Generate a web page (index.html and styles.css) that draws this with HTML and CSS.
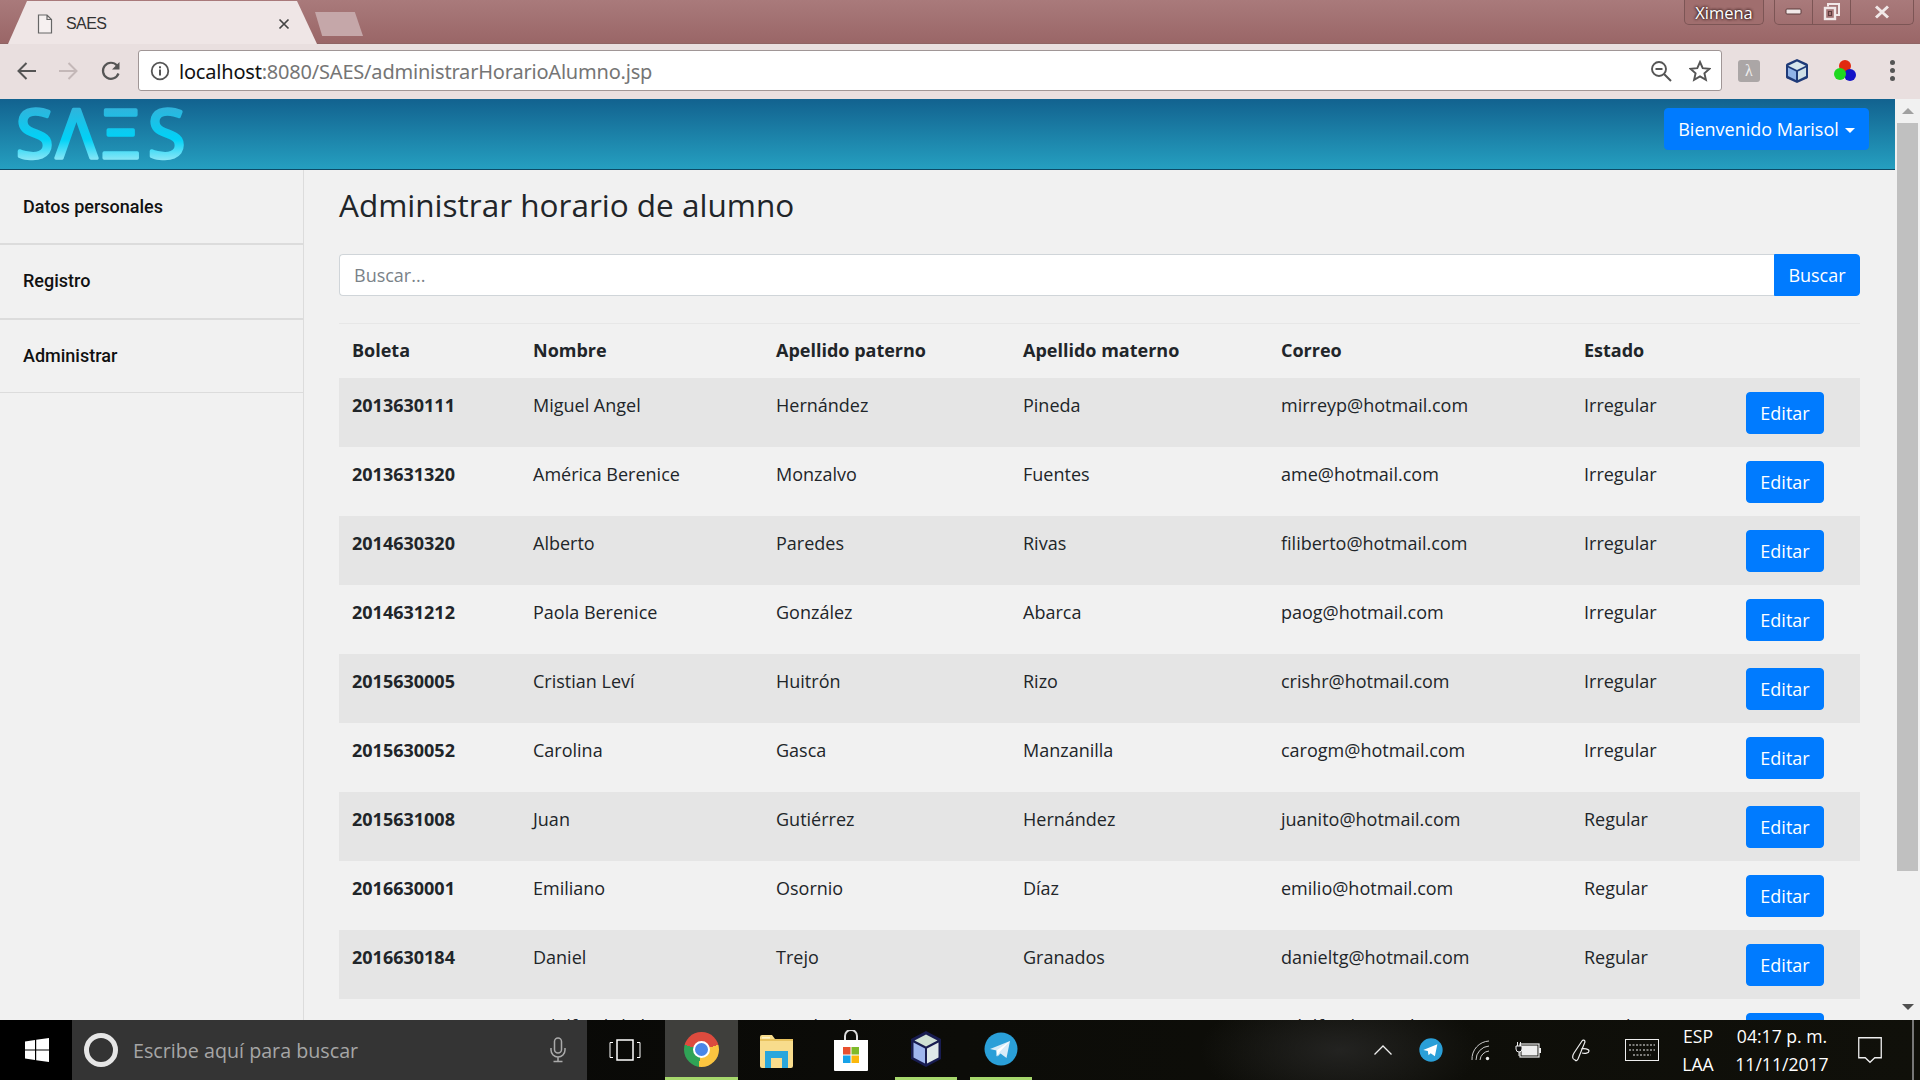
FILE: index.html
```html
<!DOCTYPE html>
<html lang="es">

<head>
    <meta charset="UTF-8">
    <meta name="viewport" content="width=device-width, initial-scale=1.0">
    <title>SAES</title>
    <link rel="stylesheet" href="styles.css">
</head>

<body>
    <div class="tabstrip">
        <div class="tab">
            <svg class="tab-icon" width="16" height="20" viewBox="0 0 16 20">
                <path d="M1.5 1h8.500l4.500 4.500v13.500h-13z M10 1v4.500h4.500" fill="#f6f0f0" stroke="#666" stroke-width="1.200"/>
            </svg>
            <span class="tab-title">SAES</span>
            <svg class="tab-close" width="12" height="12" viewBox="0 0 12 12">
                <path d="M1.500 1.500l9 9M10.500 1.500l-9 9" stroke="#444" stroke-width="1.700"/>
            </svg>
        </div>
        <div class="new-tab"></div>
        <div class="user-button">Ximena</div>
        <div class="window-buttons">
            <div class="window-button">
                <svg width="18" height="8" viewBox="0 0 18 8"><rect x="1" y="1" width="15" height="5" rx="1" fill="#f1e8e8" stroke="#5c3c3c"/></svg>
            </div>
            <div class="window-button">
                <svg width="20" height="20" viewBox="0 0 20 20"><path d="M6 4.500V2h11v11h-3" fill="none" stroke="#f1e8e8" stroke-width="2"/><rect x="3" y="6" width="10" height="11" fill="none" stroke="#f1e8e8" stroke-width="2.400"/><rect x="6.500" y="9.500" width="3" height="4" fill="none" stroke="#5c3c3c"/></svg>
            </div>
            <div class="window-button window-close">
                <svg width="16" height="14" viewBox="0 0 16 14"><path d="M2 1.500l12 11M14 1.500l-12 11" stroke="#f1e8e8" stroke-width="3"/></svg>
            </div>
        </div>
    </div>

    <div class="toolbar">
        <button class="tool-button">
            <svg width="22" height="22" viewBox="0 0 22 22"><path d="M20 11H3M10.500 3L2.500 11l8 8" fill="none" stroke="#555" stroke-width="2"/></svg>
        </button>
        <button class="tool-button">
            <svg width="22" height="22" viewBox="0 0 22 22"><path d="M2 11h17M11.500 3l8 8-8 8" fill="none" stroke="#c4b8b8" stroke-width="2"/></svg>
        </button>
        <button class="tool-button">
            <svg width="22" height="22" viewBox="0 0 22 22"><path d="M18.500 13.500A8 8 0 1 1 17 5.500" fill="none" stroke="#555" stroke-width="2.200"/><path d="M19.500 2v7.500h-7.500z" fill="#555"/></svg>
        </button>
        <div class="omnibox">
            <svg class="omni-info" width="20" height="20" viewBox="0 0 20 20">
                <circle cx="10" cy="10" r="8.300" fill="none" stroke="#555" stroke-width="1.800"/>
                <rect x="9" y="8.500" width="2" height="6" fill="#555"/>
                <rect x="9" y="5.300" width="2" height="2" fill="#555"/>
            </svg>
            <span class="url"><span class="url-host">localhost</span>:8080/SAES/administrarHorarioAlumno.jsp</span>
            <svg class="omni-zoom" width="22" height="22" viewBox="0 0 22 22">
                <circle cx="9" cy="9" r="7" fill="none" stroke="#555" stroke-width="1.900"/>
                <path d="M5.500 9h7M14 14l7 7" stroke="#555" stroke-width="2"/>
            </svg>
            <svg class="omni-star" width="22" height="22" viewBox="0 0 22 22">
                <path d="M11 2l2.700 6.200 6.800.6-5.100 4.500 1.500 6.600-5.900-3.500-5.900 3.500 1.500-6.600-5.100-4.500 6.800-.6z" fill="none" stroke="#555" stroke-width="1.900"/>
            </svg>
        </div>
        <div class="extensions">
            <div class="ext-lambda">λ</div>
            <svg class="ext-box" width="26" height="26" viewBox="0 0 26 26">
                <path d="M13 1l10 4.500q1 .5 1 1.500v12q0 1-1 1.500L13 25 3 20.500q-1-.5-1-1.500V7q0-1 1-1.500z" fill="#1e3a78"/>
                <path d="M13 3.500l8.800 4.300L13 12 4.200 7.800z" fill="#d8e6ec"/>
                <path d="M4 9.500l8 4v8.500l-8-4z" fill="#8fb3e8"/>
                <path d="M22 9.500l-8 4v8.500l8-4z" fill="#cfdfe6"/>
            </svg>
            <svg class="ext-dots" width="24" height="24" viewBox="0 0 24 24">
                <circle cx="12" cy="7" r="6" fill="#e2290f"/>
                <circle cx="17" cy="16" r="6" fill="#1414c8"/>
                <circle cx="7" cy="15" r="6" fill="#1fd81f"/>
            </svg>
            <div class="menu-dots"><span></span><span></span><span></span></div>
        </div>
    </div>

    <div class="page">
        <div class="app">
            <header class="app-header">
                <svg class="logo" width="190" height="64" viewBox="0 0 190 64">
                    <defs>
                        <linearGradient id="logoFill" gradientUnits="userSpaceOnUse" x1="0" y1="6" x2="0" y2="58">
                            <stop offset="0" stop-color="#2fb4dc"/>
                            <stop offset="0.6" stop-color="#00d2f7"/>
                            <stop offset="1" stop-color="#8ae6f6"/>
                        </linearGradient>
                    </defs>
                    <text class="logo-text" x="1 41 87 133" y="56" fill="url(#logoFill)" stroke="url(#logoFill)">SΛΞS</text>
                </svg>
                <button class="btn btn-user">Bienvenido Marisol<span class="caret"></span></button>
            </header>
            <div class="app-body">
                <nav class="sidebar">
                    <a class="side-link side-link-thick">Datos personales</a>
                    <a class="side-link side-link-thick">Registro</a>
                    <a class="side-link">Administrar</a>
                </nav>
                <main class="content">
                    <h2 class="page-title">Administrar horario de alumno</h2>
                    <div class="search-group">
                        <input class="search-input" type="text" placeholder="Buscar...">
                        <button class="btn btn-search">Buscar</button>
                    </div>
                    <table class="student-table">
                        <colgroup>
                            <col class="col-boleta">
                            <col class="col-nombre">
                            <col class="col-paterno">
                            <col class="col-materno">
                            <col class="col-correo">
                            <col class="col-estado">
                            <col>
                        </colgroup>
                        <thead>
                            <tr>
                                <th>Boleta</th>
                                <th>Nombre</th>
                                <th>Apellido paterno</th>
                                <th>Apellido materno</th>
                                <th>Correo</th>
                                <th>Estado</th>
                                <th></th>
                            </tr>
                        </thead>
                        <tbody>
                            <tr>
                                <th>2013630111</th>
                                <td>Miguel Angel</td>
                                <td>Hernández</td>
                                <td>Pineda</td>
                                <td>mirreyp@hotmail.com</td>
                                <td>Irregular</td>
                                <td><button class="btn">Editar</button></td>
                            </tr>
                            <tr>
                                <th>2013631320</th>
                                <td>América Berenice</td>
                                <td>Monzalvo</td>
                                <td>Fuentes</td>
                                <td>ame@hotmail.com</td>
                                <td>Irregular</td>
                                <td><button class="btn">Editar</button></td>
                            </tr>
                            <tr>
                                <th>2014630320</th>
                                <td>Alberto</td>
                                <td>Paredes</td>
                                <td>Rivas</td>
                                <td>filiberto@hotmail.com</td>
                                <td>Irregular</td>
                                <td><button class="btn">Editar</button></td>
                            </tr>
                            <tr>
                                <th>2014631212</th>
                                <td>Paola Berenice</td>
                                <td>González</td>
                                <td>Abarca</td>
                                <td>paog@hotmail.com</td>
                                <td>Irregular</td>
                                <td><button class="btn">Editar</button></td>
                            </tr>
                            <tr>
                                <th>2015630005</th>
                                <td>Cristian Leví</td>
                                <td>Huitrón</td>
                                <td>Rizo</td>
                                <td>crishr@hotmail.com</td>
                                <td>Irregular</td>
                                <td><button class="btn">Editar</button></td>
                            </tr>
                            <tr>
                                <th>2015630052</th>
                                <td>Carolina</td>
                                <td>Gasca</td>
                                <td>Manzanilla</td>
                                <td>carogm@hotmail.com</td>
                                <td>Irregular</td>
                                <td><button class="btn">Editar</button></td>
                            </tr>
                            <tr>
                                <th>2015631008</th>
                                <td>Juan</td>
                                <td>Gutiérrez</td>
                                <td>Hernández</td>
                                <td>juanito@hotmail.com</td>
                                <td>Regular</td>
                                <td><button class="btn">Editar</button></td>
                            </tr>
                            <tr>
                                <th>2016630001</th>
                                <td>Emiliano</td>
                                <td>Osornio</td>
                                <td>Díaz</td>
                                <td>emilio@hotmail.com</td>
                                <td>Regular</td>
                                <td><button class="btn">Editar</button></td>
                            </tr>
                            <tr>
                                <th>2016630184</th>
                                <td>Daniel</td>
                                <td>Trejo</td>
                                <td>Granados</td>
                                <td>danieltg@hotmail.com</td>
                                <td>Regular</td>
                                <td><button class="btn">Editar</button></td>
                            </tr>
                            <tr>
                                <th>2016630210</th>
                                <td>Adolfo Abdiel</td>
                                <td>Sandoval</td>
                                <td>Ramos</td>
                                <td>adolfo@hotmail.com</td>
                                <td>Regular</td>
                                <td><button class="btn">Editar</button></td>
                            </tr>
                        </tbody>
                    </table>
                </main>
            </div>
        </div>
        <div class="scrollbar">
            <div class="scroll-arrow-up"></div>
            <div class="scroll-thumb"></div>
            <div class="scroll-arrow-down"></div>
        </div>
    </div>

    <div class="taskbar">
        <div class="start">
            <svg width="24" height="24" viewBox="0 0 24 24">
                <path d="M0 3.400l10-1.400v9.400H0zM11.200 1.800L24 0v11.400H11.200zM0 12.600h10V22L0 20.600zM11.200 12.600H24V24l-12.800-1.800z" fill="#fff"/>
            </svg>
        </div>
        <div class="task-search">
            <div class="cortana"></div>
            <span class="task-search-text">Escribe aquí para buscar</span>
            <svg class="task-mic" width="16" height="26" viewBox="0 0 16 26">
                <rect x="4.500" y="1" width="7" height="15" rx="3.500" fill="none" stroke="#aaa" stroke-width="1.500"/>
                <path d="M1 11v2a7 7 0 0 0 14 0v-2M8 20v4M3.500 24.500h9" fill="none" stroke="#aaa" stroke-width="1.500"/>
            </svg>
        </div>
        <div class="task-view">
            <svg width="32" height="22" viewBox="0 0 32 22">
                <rect x="8" y="1" width="16" height="20" fill="none" stroke="#fff" stroke-width="1.500"/>
                <path d="M4 3.500H1v15h3M28 3.500h3v15h-3" fill="none" stroke="#fff"/>
            </svg>
        </div>
        <div class="task-app task-chrome">
            <div class="chrome-icon"><div class="chrome-eye"></div></div>
        </div>
        <div class="task-app">
            <svg width="34" height="34" viewBox="0 0 34 34">
                <path d="M1 3a2 2 0 0 1 2-2h10l3 4h16a2 2 0 0 1 2 2v25a2 2 0 0 1-2 2H3a2 2 0 0 1-2-2z" fill="#f8dc8c"/>
                <rect x="1" y="5" width="33" height="2" fill="#e8c25e"/>
                <rect x="3" y="3" width="8" height="1.500" fill="#fff4c8"/>
                <path d="M6 34V17h23v17h-6v-10H12v10z" fill="#29a6dc"/>
            </svg>
        </div>
        <div class="task-app">
            <svg width="36" height="42" viewBox="0 0 36 42">
                <path d="M12 12V6a6 6 0 0 1 12 0v6" fill="none" stroke="#ddd" stroke-width="2"/>
                <path d="M1 10h34v30a1 1 0 0 1-1 1H2a1 1 0 0 1-1-1z" fill="#fff"/>
                <rect x="10" y="17" width="7.500" height="7.500" fill="#e8502e"/>
                <rect x="18.500" y="17" width="7.500" height="7.500" fill="#7fba2a"/>
                <rect x="10" y="25.500" width="7.500" height="7.500" fill="#17a2e8"/>
                <rect x="18.500" y="25.500" width="7.500" height="7.500" fill="#fbb80c"/>
            </svg>
        </div>
        <div class="task-app task-open task-box">
            <svg width="36" height="38" viewBox="0 0 36 38">
                <path d="M18 1l15 8v20l-15 8-15-8V9z" fill="#181c50"/>
                <path d="M18 4.500l11.500 6L18 16.500l-11.500-6z" fill="#cfe0d4"/>
                <path d="M5.500 12.500L17 18.500v15l-11.500-6z" fill="#9fb6ee"/>
                <path d="M30.500 12.500L19 18.500v15l11.500-6z" fill="#dfe8e8"/>
            </svg>
        </div>
        <div class="task-app task-open task-telegram">
            <svg width="34" height="34" viewBox="0 0 34 34">
                <circle cx="17" cy="17" r="16.500" fill="#2a9fd8"/>
                <path d="M6 17l20-8-3.500 17-6-4.500-3 3-1-6z" fill="#d8ecf8"/>
                <path d="M12.500 18.500L26 9 15.500 20l-3 4.500z" fill="#fff"/>
            </svg>
        </div>
        <div class="tray">
            <svg class="tray-chevron" width="20" height="12" viewBox="0 0 20 12"><path d="M1.500 10.500L10 2l8.500 8.500" fill="none" stroke="#eee" stroke-width="1.300"/></svg>
            <svg class="tray-telegram" width="24" height="24" viewBox="0 0 34 34">
                <circle cx="17" cy="17" r="16.500" fill="#2a9fd8"/>
                <path d="M6 17l20-8-3.500 17-6-4.500-3 3-1-6z" fill="#fff"/>
            </svg>
            <svg class="tray-wifi" width="20" height="22" viewBox="0 0 20 22">
                <path d="M1 21A18 18 0 0 1 18 2M5 21A14 14 0 0 1 18 7M9 21A10 10 0 0 1 18 12" fill="none" stroke="#ccc"/>
                <circle cx="16.500" cy="19.500" r="1.700" fill="#eee"/>
            </svg>
            <svg class="tray-battery" width="26" height="18" viewBox="0 0 26 18">
                <rect x="5" y="3" width="19" height="13" fill="none" stroke="#eee" stroke-width="1.200"/>
                <rect x="6.500" y="4.500" width="16" height="10" fill="#eee"/>
                <rect x="24" y="7" width="2" height="5" fill="#eee"/>
                <path d="M1 5h6v3a3 3 0 0 1-6 0zM2.500 5V1M5.500 5V1M4 11v4" fill="#111" stroke="#eee"/>
            </svg>
            <svg class="tray-pen" width="22" height="24" viewBox="0 0 22 24">
                <path d="M4 22c-3-1-3-4-1-7l8-12c1-1.500 3-1 3 1l-7 17c-1 2-2 2-3 1zM10 11c3-1 8 0 8 2 0 2-4 3-7 2" fill="none" stroke="#eee" stroke-width="1.200"/>
            </svg>
            <svg class="tray-keyboard" width="34" height="22" viewBox="0 0 34 22">
                <rect x="0.500" y="0.500" width="33" height="21" fill="none" stroke="#eee"/>
                <path d="M4 6h26M4 11h5M11 11h5M18 11h12M8 16h18" stroke="#eee" stroke-dasharray="2 1.500"/>
            </svg>
            <div class="tray-lang"><span>ESP</span><span>LAA</span></div>
            <div class="tray-clock"><span>04:17 p. m.</span><span>11/11/2017</span></div>
            <svg class="tray-notify" width="24" height="27" viewBox="0 0 24 27">
                <path d="M0.750 0.750h22.500v20h-6.500l-4.750 4.500-4.750-4.500H0.750z" fill="none" stroke="#eee" stroke-width="1.300"/>
            </svg>
            <div class="show-desktop"></div>
        </div>
    </div>
</body>

</html>
```

FILE: styles.css
```css
* {
    box-sizing: border-box;
}

body {
    margin: 0;
    height: 1080px;
    overflow: hidden;
    display: flex;
    flex-direction: column;
    background-color: #f1f1f1;
    color: #212529;
    font-family: "Open Sans", Arial, sans-serif;
}

/* browser window */

.tabstrip {
    height: 44px;
    flex: none;
    display: flex;
    align-items: flex-start;
    padding-left: 8px;
    background: linear-gradient(#a97a7b, #9a6667);
    border-bottom: 1px solid #8f6464;
}

.tab {
    width: 309px;
    height: 43px;
    margin-top: 1px;
    padding: 2px 27px 0 29px;
    display: flex;
    align-items: center;
    background-color: #efe6e6;
    clip-path: polygon(0 100%, 19px 0, 289px 0, 100% 100%);
}

.tab-icon {
    margin-right: 13px;
}

.tab-title {
    flex: 1;
    font-family: "Liberation Sans", Arial, sans-serif;
    font-size: 16px;
    letter-spacing: -0.6px;
    color: #333;
}

.new-tab {
    width: 48px;
    height: 24px;
    margin: 12px 0 0 -2px;
    background-color: #c5a7a9;
    clip-path: polygon(0 0, 83% 0, 100% 100%, 15% 100%);
}

.user-button {
    margin-left: auto;
    width: 80px;
    height: 25px;
    border: 1px solid #7c5555;
    border-top: none;
    border-radius: 0 0 5px 5px;
    text-align: center;
    font-family: "Open Sans", Arial, sans-serif;
    font-size: 16.500px;
    line-height: 26px;
    color: #fff;
    text-shadow: 0 0 3px #2c1515, 0 0 3px #2c1515;
    background-color: #a06e6e;
}

.window-buttons {
    display: flex;
    height: 25px;
    margin: 0 6px 0 10px;
    border: 1px solid #7c5555;
    border-top: none;
    border-radius: 0 0 5px 5px;
}

.window-button {
    width: 38px;
    display: flex;
    align-items: center;
    justify-content: center;
    border-right: 1px solid #7c5555;
}

.window-close {
    width: 62px;
    border-right: none;
}

.toolbar {
    height: 55px;
    flex: none;
    display: flex;
    align-items: center;
    padding: 0 0 2px 6px;
    background-color: #e9dfdf;
}

.tool-button {
    width: 41px;
    height: 40px;
    padding: 0;
    display: flex;
    align-items: center;
    justify-content: center;
    background: none;
    border: none;
}

.tool-button:last-of-type {
    margin-left: 2px;
}

.omnibox {
    width: 1584px;
    height: 41px;
    margin-left: 7px;
    padding: 0 10px 0 11px;
    display: flex;
    align-items: center;
    background-color: #fff;
    border: 1px solid #a09696;
    border-radius: 3px;
}

.url {
    flex: 1;
    margin-left: 9px;
    padding-top: 1px;
    font-family: "Noto Sans", Arial, sans-serif;
    font-size: 20px;
    letter-spacing: -0.2px;
    color: #757575;
    white-space: nowrap;
}

.url-host {
    color: #111;
}

.omni-zoom {
    margin-right: 1px;
}

.omni-star {
    margin-left: 16px;
}

.extensions {
    flex: 1;
    display: flex;
    align-items: center;
    padding-left: 16px;
}

.ext-lambda {
    width: 22px;
    height: 22px;
    border-radius: 3px;
    text-align: center;
    font-family: "Liberation Serif", serif;
    font-size: 16px;
    line-height: 22px;
    color: #eee;
    background-color: #aba6a6;
}

.ext-box {
    margin-left: 24px;
}

.ext-dots {
    margin-left: 23px;
}

.menu-dots {
    margin-left: 33px;
    display: flex;
    flex-direction: column;
    gap: 3px;
}

.menu-dots span {
    width: 5px;
    height: 5px;
    border-radius: 50%;
    background-color: #555;
}

/* page */

.page {
    flex: 1;
    min-height: 0;
    display: flex;
}

.app {
    flex: 1;
    min-width: 0;
    display: flex;
    flex-direction: column;
}

.app-header {
    height: 71px;
    flex: none;
    display: flex;
    align-items: flex-start;
    justify-content: space-between;
    padding: 9px 26px 0 15px;
    background: linear-gradient(#12628f, #259fc0);
    border-bottom: 1px solid #0d4a66;
}

.logo {
    display: block;
    margin-top: -6px;
}

.logo-text {
    font-family: "Open Sans", sans-serif;
    font-size: 68px;
    stroke-width: 3.500;
    stroke-linejoin: round;
    stroke-linecap: round;
}

.btn {
    height: 42px;
    padding: 0 14px;
    font-family: "Open Sans", Arial, sans-serif;
    font-size: 18px;
    color: #fff;
    background-color: #007bff;
    border: 1px solid #007bff;
    border-radius: 4px;
}

.btn-user {
    width: 205px;
    padding: 0 10px;
    white-space: nowrap;
}

.caret {
    display: inline-block;
    margin-left: 6px;
    vertical-align: 3px;
    border-top: 5px solid #fff;
    border-left: 5px solid transparent;
    border-right: 5px solid transparent;
}

.app-body {
    flex: 1;
    min-height: 0;
    display: flex;
}

.sidebar {
    width: 304px;
    flex: none;
    border-right: 1px solid #dcdcdc;
}

.side-link {
    display: block;
    height: 73px;
    padding: 0 23px;
    font-family: Roboto, Arial, sans-serif;
    font-size: 18px;
    font-weight: 500;
    line-height: 72px;
    color: #111;
    border-bottom: 1px solid #dcdcdc;
}

.side-link-thick {
    height: 75px;
    border-bottom: 2px solid #dcdcdc;
}

.side-link:first-child {
    line-height: 74px;
}

.content {
    flex: 1;
    min-width: 0;
    padding: 16px 35px 0;
    overflow: hidden;
}

.page-title {
    margin: 0 0 30px;
    font-size: 31.500px;
    font-weight: 400;
    line-height: 38px;
}

.search-group {
    display: flex;
    height: 42px;
}

.search-input {
    flex: 1;
    min-width: 0;
    padding: 0 14px;
    font-family: "Open Sans", Arial, sans-serif;
    font-size: 18px;
    background-color: #fff;
    border: 1px solid #d0d5d9;
    border-right: none;
    border-radius: 4px 0 0 4px;
}

.search-input::placeholder {
    color: #7a8288;
}

.btn-search {
    width: 86px;
    padding: 0;
    border-radius: 0 4px 4px 0;
}

.student-table {
    width: 1521px;
    margin-top: 27px;
    table-layout: fixed;
    border-collapse: collapse;
    font-size: 18px;
}

.col-boleta {
    width: 181px;
}

.col-nombre {
    width: 243px;
}

.col-paterno {
    width: 247px;
}

.col-materno {
    width: 258px;
}

.col-correo {
    width: 303px;
}

.col-estado {
    width: 162px;
}

.student-table th,
.student-table td {
    padding: 14px 13px 0;
    height: 69px;
    vertical-align: top;
    text-align: left;
    line-height: 27px;
    border-top: 1px solid #e7e7e7;
}

.student-table thead th {
    height: 54px;
    padding-top: 13px;
}

.student-table tbody th,
.student-table tbody td {
    border-top: none;
}

.student-table tbody tr:nth-child(odd) {
    background-color: #e5e5e5;
}

.student-table .btn {
    display: block;
    width: 78px;
    height: 42px;
    padding: 0;
}

/* scrollbar */

.scrollbar {
    width: 25px;
    flex: none;
    display: flex;
    flex-direction: column;
    align-items: center;
    padding-top: 9px;
    background-color: #f1f1f1;
}

.scroll-arrow-up {
    border-bottom: 6px solid #a0a0a0;
    border-left: 6px solid transparent;
    border-right: 6px solid transparent;
}

.scroll-thumb {
    width: 21px;
    height: 748px;
    margin-top: 9px;
    background-color: #c0c0c0;
}

.scroll-arrow-down {
    margin-top: 133px;
    border-top: 6px solid #505050;
    border-left: 6px solid transparent;
    border-right: 6px solid transparent;
}

/* windows taskbar */

.taskbar {
    height: 60px;
    flex: none;
    display: flex;
    color: #fff;
    background:
        radial-gradient(ellipse 140px 60px at 1340px 30px, #232321, transparent),
        linear-gradient(90deg, #050505, #0c0c08 50%, #10100a);
}

.start {
    width: 72px;
    flex: none;
    display: flex;
    align-items: center;
    justify-content: center;
    padding-left: 2px;
    background-color: #000;
}

.task-search {
    width: 515px;
    flex: none;
    display: flex;
    align-items: center;
    padding: 0 21px 0 12px;
    background-color: #343434;
}

.cortana {
    width: 34px;
    height: 34px;
    flex: none;
    border: 5px solid #e6e6e6;
    border-radius: 50%;
}

.task-search-text {
    flex: 1;
    margin-left: 15px;
    font-size: 19.700px;
    color: #a6a6a6;
}

.task-view {
    width: 78px;
    flex: none;
    display: flex;
    align-items: center;
    justify-content: center;
    padding-right: 3px;
}

.task-app {
    width: 75px;
    flex: none;
    display: flex;
    align-items: center;
    justify-content: center;
    padding-top: 1px;
}

.task-chrome {
    width: 73px;
    padding-left: 0;
    background-color: #3f3f3c;
    border-bottom: 3px solid #a6d76c;
}

.task-open {
    width: 62px;
    border-bottom: 3px solid #a6d76c;
}

.task-box {
    margin-left: 7px;
}

.task-telegram {
    margin-left: 13px;
}

.chrome-icon {
    width: 35px;
    height: 35px;
    display: flex;
    align-items: center;
    justify-content: center;
    border-radius: 50%;
    background: conic-gradient(#dd4b3e 0 75deg, #fbc540 75deg 190deg, #2fa356 190deg 285deg, #dd4b3e 285deg);
}

.chrome-eye {
    width: 17px;
    height: 17px;
    border: 2.500px solid #fff;
    border-radius: 50%;
    background-color: #4a86e8;
}

.tray {
    flex: 1;
    display: flex;
    align-items: center;
    padding-left: 341px;
    font-size: 17.600px;
}

.tray-telegram {
    margin-left: 26px;
}

.tray-wifi {
    margin-left: 28px;
}

.tray-battery {
    margin-left: 24px;
}

.tray-pen {
    margin-left: 30px;
}

.tray-keyboard {
    margin-left: 32px;
}

.tray-lang,
.tray-clock {
    display: flex;
    flex-direction: column;
    align-items: center;
    gap: 4px;
    line-height: 24px;
}

.tray-lang {
    width: 40px;
    margin-left: 19px;
}

.tray-clock {
    width: 110px;
    margin-left: 9px;
}

.tray-notify {
    margin-left: 21px;
}

.show-desktop {
    width: 2px;
    height: 60px;
    margin-left: 30px;
    background-color: #777;
}
```
